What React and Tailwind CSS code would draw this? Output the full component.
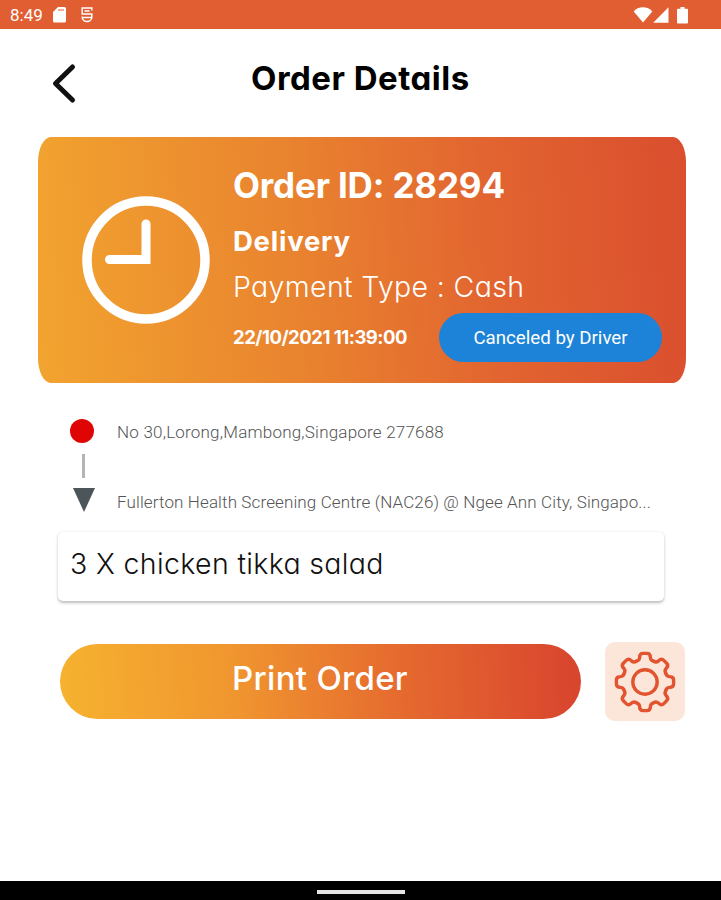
const TEETH = [0, 45, 90, 135, 180, 225, 270, 315];

function StatusBar() {
  return (
    <div className="flex h-[29px] items-center justify-between bg-[#e05e31] pl-[10px] pr-[33px] pt-[1px] text-white">
      <div className="flex items-center">
        <span className="w-[43px] font-[Roboto,sans-serif] text-[17px] leading-5">8:49</span>
        <svg width="13" height="16" viewBox="0 0 13 16" className="block">
          <path fill="currentColor" fillRule="evenodd" d="M5 0h6.500a1.500 1.500 0 0 1 1.500 1.500v12.500a1.500 1.500 0 0 1-1.500 1.500h-10a1.500 1.500 0 0 1-1.500-1.500V5zM5.500 2v2h1V2zM7.500 2v2h1V2zM9.500 2v2h1V2z" />
        </svg>
        <svg width="12" height="16" viewBox="0 0 12 16" className="ml-[15px] block" fill="none" stroke="currentColor" strokeWidth="1.500">
          <path d="M10.800 3.500V1H1.200v6h9.600V10a4.800 4.600 0 0 1-9.600 0V9.500M3.500 4h5M1 10.500h10" />
        </svg>
      </div>
      <div className="flex items-center">
        <svg width="20" height="16" viewBox="0 0 20 16" className="block">
          <path fill="currentColor" d="M10 15.500 .7 4.600C3 1.600 6.300.3 10 .3s7 1.300 9.300 4.300z" />
        </svg>
        <svg width="16" height="16" viewBox="0 0 16 16" className="block">
          <path fill="currentColor" d="M15.500.3v15.400H.2z" />
        </svg>
        <svg width="11" height="17" viewBox="0 0 11 17" className="ml-[8px] block">
          <path fill="currentColor" d="M3.500 0h4v1.700H10a1 1 0 0 1 1 1V15.500a1 1 0 0 1-1 1H1a1 1 0 0 1-1-1V2.700a1 1 0 0 1 1-1h2.500z" />
        </svg>
      </div>
    </div>
  );
}

function ClockIcon() {
  return (
    <svg width="128" height="128" viewBox="0 0 128 128" fill="none" stroke="white" className="block">
      <circle cx="64" cy="64" r="59" strokeWidth="9.500" />
      <path d="M64 28v35.500H27.500" strokeWidth="9" strokeLinecap="round" strokeLinejoin="miter" />
    </svg>
  );
}

function GearIcon() {
  return (
    <svg width="64" height="64" viewBox="-32 -32 64 64" fill="none" stroke="#e2532f" strokeWidth="3.400" className="block">
      {TEETH.map(deg => (
        <path
          key={deg}
          transform={`rotate(${deg})`}
          strokeLinecap="round"
          d="M-8.600-20.800Q-5.600-21.500-5.400-24.500Q-5.400-28.600-2-28.600H2Q5.400-28.600 5.400-24.500Q5.600-21.500 8.600-20.800"
        />
      ))}
      <circle r="12.200" />
    </svg>
  );
}

function OrderCard() {
  return (
    <div className="ml-[38px] mt-[9px] flex h-[246px] w-[648px] bg-linear-[86deg,#f2a42f_0%,#e9832f_40%,#e26430_70%,#da4e2e_100%] pl-[44px] pt-[59px] text-white [border-radius:13px/25px]">
      <ClockIcon />
      <div className="-mt-[59px] ml-[23px] flex flex-1 flex-col pt-[26px]">
        <h2 className="h-[44px] whitespace-nowrap text-[35px] font-bold leading-[44px] tracking-[-0.15px]">Order ID: 28294</h2>
        <p className="mt-[16px] h-[36px] whitespace-nowrap text-[27.500px] font-bold leading-[36px] tracking-[0.75px]">Delivery</p>
        <p className="mt-[11px] h-[36px] whitespace-nowrap text-[28.500px] font-light leading-[34px] tracking-[0.35px]">Payment Type : Cash</p>
        <div className="mt-[7px] flex h-[49px] items-center">
          <span className="w-[206px] whitespace-nowrap text-[18.500px] font-bold tracking-[-0.5px]">22/10/2021 11:39:00</span>
          <span className="flex h-[49px] w-[223px] items-center justify-center rounded-full bg-[#1c83d8] pt-[2px] font-[Roboto,sans-serif] text-[18.700px]">
            Canceled by Driver
          </span>
        </div>
      </div>
    </div>
  );
}

function Route() {
  return (
    <div className="flex h-[120px] pl-[70px] pt-[36px] font-[Roboto,sans-serif] text-[17px] font-light text-[#555]">
      <div className="flex w-[26px] flex-col items-center">
        <div className="mr-[2px] h-6 w-6 shrink-0 rounded-full bg-[#e00505]" />
        <div className="mt-[11px] h-[24px] w-[3px] shrink-0 bg-[#b4b4b4]" />
        <svg width="22" height="24" viewBox="0 0 22 24" className="ml-px mt-[10px] block shrink-0">
          <path d="M0 0h22L11 24z" fill="#4c555a" />
        </svg>
      </div>
      <div className="ml-[21px] flex flex-col pt-px">
        <p className="h-6 whitespace-nowrap leading-6 tracking-[0.21px]">No 30,Lorong,Mambong,Singapore 277688</p>
        <p className="mt-[46px] h-6 whitespace-nowrap leading-6 tracking-[0.12px]">Fullerton Health Screening Centre (NAC26) @ Ngee Ann City, Singapo...</p>
      </div>
    </div>
  );
}

export default function App() {
  return (
    <div className="flex h-[900px] w-[721px] flex-col overflow-hidden bg-white font-[Inter,sans-serif] [font-feature-settings:'cv11']">
      <StatusBar />
      <header className="flex h-[99px] pl-[51px] pt-[28px]">
        <svg width="26" height="52" viewBox="0 0 26 52" className="block" fill="none" stroke="#111" strokeWidth="5" strokeLinecap="round" strokeLinejoin="round">
          <path d="M21.500 10 4.500 26.500 21.500 43" />
        </svg>
        <h1 className="ml-[174px] whitespace-nowrap text-[33px] font-bold leading-[42px] tracking-[0.5px] text-black">Order Details</h1>
      </header>
      <OrderCard />
      <Route />
      <main className="mt-[29px] flex flex-col">
        <div className="ml-[58px] h-[69px] w-[606px] rounded-[5px] bg-white pl-[12px] text-[28.500px] font-light leading-[63px] tracking-[0.35px] text-[#111] shadow-[0_1.5px_3px_rgba(0,0,0,0.26)]">
          3 X chicken tikka salad
        </div>
        <div className="mt-[41px] flex items-center pl-[60px]">
          <button className="h-[75px] w-[521px] rounded-full bg-linear-[87deg,#f6b22f_0%,#f0962f_33%,#e5692f_66%,#d9462e_98%] pb-[6px] pr-[1px] text-[33px] font-medium tracking-[0.3px] text-white">
            Print Order
          </button>
          <button className="ml-[24px] flex h-[79px] w-[80px] items-center justify-center rounded-[10px] bg-[#fce6d9]">
            <GearIcon />
          </button>
        </div>
      </main>
      <footer className="mt-auto flex h-[19px] justify-center bg-black pt-[9px]">
        <div className="h-[4px] w-[88px] bg-[#e4e4e4]" />
      </footer>
    </div>
  );
}
